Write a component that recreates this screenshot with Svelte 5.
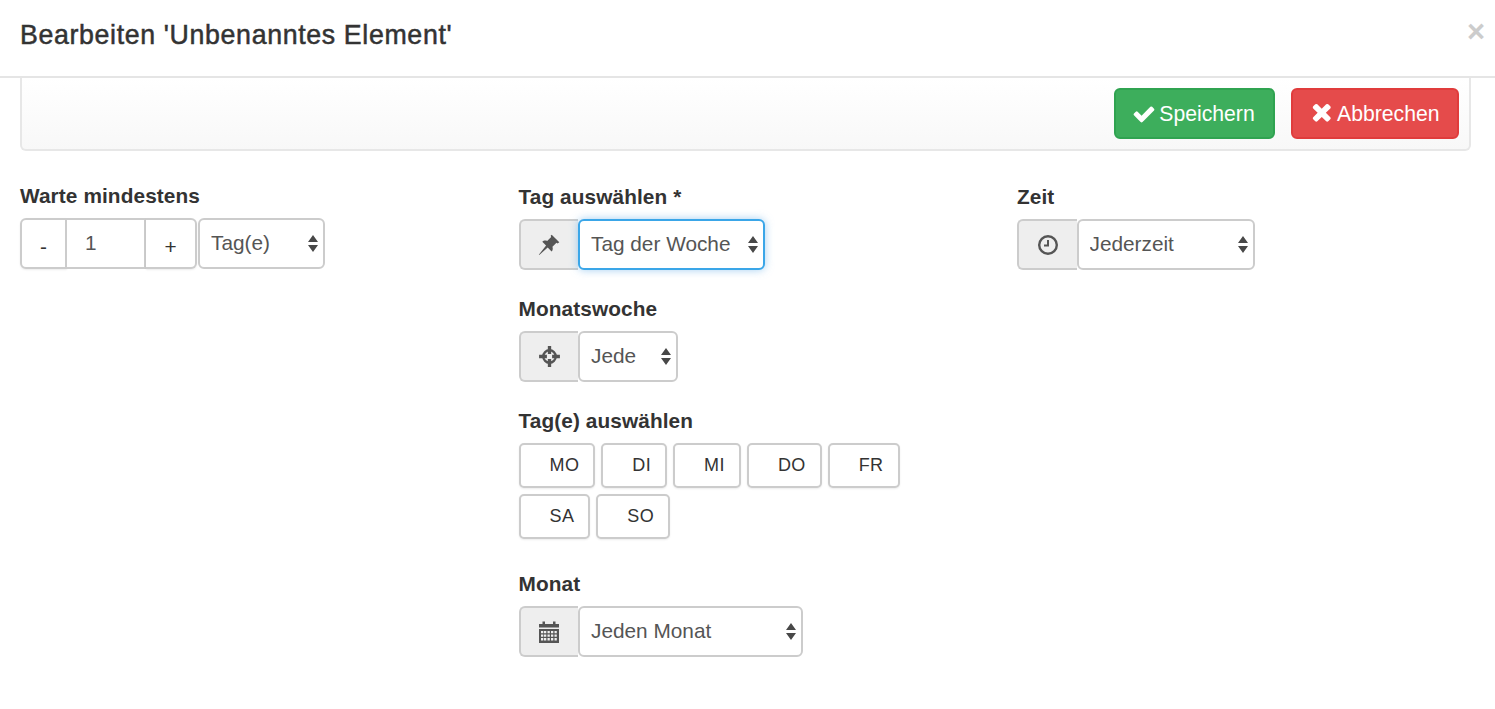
<script>
  const dayRows = ['MO', 'DI', 'MI', 'DO', 'FR', 'SA', 'SO'];
</script>

<div class="modal">
  <header class="modal-header">
    <h4>Bearbeiten 'Unbenanntes Element'</h4>
    <button class="close">×</button>
  </header>

  <div class="toolbar">
    <button class="btn save">
      <svg viewBox="0 0 1792 1792" width="24" height="24"><path d="M1671 566q0 40-28 68l-724 724-136 136q-28 28-68 28t-68-28l-136-136-362-362q-28-28-28-68t28-68l136-136q28-28 68-28t68 28l294 295 656-657q28-28 68-28t68 28l136 136q28 28 28 68z" /></svg>
      Speichern
    </button>
    <button class="btn cancel">
      <svg viewBox="0 0 1408 1792" width="21.500" height="27"><path d="M1298 1214q0 40-28 68l-136 136q-28 28-68 28t-68-28l-294-294-294 294q-28 28-68 28t-68-28l-136-136q-28-28-28-68t28-68l294-294-294-294q-28-28-28-68t28-68l136-136q28-28 68-28t68 28l294 294 294-294q28-28 68-28t68 28l136 136q28 28 28 68t-28 68l-294 294 294 294q28 28 28 68z" /></svg>
      Abbrechen
    </button>
  </div>

  <div class="form-row">
    <div class="col first">
      <label>Warte mindestens</label>
      <div class="stepper">
        <div class="group">
          <button class="step minus">-</button>
          <input class="count" value="1" />
          <button class="step plus">+</button>
        </div>
        <select class="unit"><option>Tag(e)</option></select>
      </div>
    </div>

    <div class="col">
      <label>Tag auswählen *</label>
      <div class="group field">
        <span class="addon">
          <svg viewBox="0 0 24 24" width="26" height="26"><path d="M14.500 2.500l7 7-1.600 1-1-.6-3.700 3.600c.6 2 .2 3.500-.8 4.500l-3.600-3.600L3 21.200l-.4-.3 6.700-8.400-3.500-3.500c1-1 2.600-1.400 4.500-.8l3.700-3.700-.5-1z" /></svg>
        </span>
        <select class="focused"><option>Tag der Woche</option></select>
      </div>

      <label>Monatswoche</label>
      <div class="group field">
        <span class="addon">
          <svg viewBox="0 0 24 24" width="25" height="25"><circle cx="12" cy="12" r="6" fill="none" stroke="#555" stroke-width="2.200" /><path d="M10.400 2h3.200v7.500h-3.200zM10.400 14.500h3.200V22h-3.200zM2 10.400h7.500v3.200H2zM14.500 10.400H22v3.200h-7.500z" /></svg>
        </span>
        <select class="w-jede"><option>Jede</option></select>
      </div>

      <label>Tag(e) auswählen</label>
      <div class="days">
        {#each dayRows as day}
          <button class="day">{day}</button>
        {/each}
      </div>

      <label>Monat</label>
      <div class="group field">
        <span class="addon">
          <svg viewBox="0 0 20 22" width="20" height="22"><path fill-rule="evenodd" d="M0 3h3.500V.5H6V3h8V.5h2.500V3H20v3.500H0zM0 8h20v14H0zM2 10v2.200h2.300V10zM5 10v2.200h2.300V10zM8.500 10v2.200h2.300V10zM12 10v2.200h2.300V10zM15.500 10v2.200h2.300V10zM2 13.500v2.200h2.300v-2.200zM5 13.500v2.200h2.300v-2.200zM8.500 13.500v2.200h2.300v-2.200zM12 13.500v2.200h2.300v-2.200zM15.500 13.500v2.200h2.300v-2.200zM2 17v2.500h2.300V17zM5 17v2.500h2.300V17zM8.500 17v2.500h2.300V17zM12 17v2.500h2.300V17zM15.500 17v2.500h2.300V17z" /></svg>
        </span>
        <select class="w-monat"><option>Jeden Monat</option></select>
      </div>
    </div>

    <div class="col">
      <label>Zeit</label>
      <div class="group field">
        <span class="addon">
          <svg viewBox="0 0 24 24" width="24" height="24"><circle cx="12" cy="12" r="8.800" fill="none" stroke="#555" stroke-width="2.400" /><path d="M11 7h2v6.500H8v-2h3z" /></svg>
        </span>
        <select class="w-zeit"><option>Jederzeit</option></select>
      </div>
    </div>
  </div>
</div>

<style>
  :global(body) {
    margin: 0;
    background: #fff;
    font-family: "Liberation Sans", Arial, sans-serif;
    color: #333;
  }

  .modal {
    height: 709px;
    overflow: hidden;
  }

  .modal-header {
    display: flex;
    justify-content: space-between;
    align-items: flex-start;
    height: 56px;
    padding: 20px 10px 0 20px;
    border-bottom: 2px solid #e5e5e5;
  }

  h4 {
    margin: 0;
    font-size: 26.750px;
    line-height: 30px;
    font-weight: 400;
    letter-spacing: 0.64px;
    -webkit-text-stroke: 0.5px #333;
  }

  .close {
    border: none;
    background: none;
    padding: 0;
    font: bold 31px/24px "Liberation Sans", sans-serif;
    color: #ccc;
  }

  .toolbar {
    display: flex;
    justify-content: flex-end;
    gap: 16px;
    margin: 0 24px 0 20px;
    padding: 10px 10px 10px 0;
    height: 51px;
    border: 2px solid #e7e7e7;
    border-top: none;
    border-radius: 0 0 6px 6px;
    background: linear-gradient(to bottom, #fff, #f8f8f8);
  }

  .btn {
    display: flex;
    align-items: center;
    justify-content: center;
    gap: 5px;
    height: 51px;
    padding: 0;
    border-radius: 6px;
    border: 2px solid;
    font: 21.200px "Liberation Sans", sans-serif;
    color: #fff;
  }

  .btn svg {
    fill: #fff;
  }

  .save {
    width: 161px;
    gap: 3px;
    padding-right: 2px;
    background: #3dae5c;
    border-color: #2fa350;
  }

  .cancel {
    width: 168px;
    background: #e54b4b;
    border-color: #e03c3c;
  }

  .form-row {
    display: grid;
    grid-template-columns: 498.500px 498.500px 1fr;
    margin-top: 33px;
  }

  .col {
    padding-left: 20px;
  }

  .col.first {
    margin-top: -1px;
  }

  label {
    display: block;
    height: 26px;
    margin-bottom: 9px;
    font-size: 20.800px;
    line-height: 26px;
    font-weight: bold;
    letter-spacing: 0.1px;
  }

  .group {
    display: flex;
    height: 51px;
  }

  .field {
    margin-bottom: 26px;
  }

  .addon {
    display: flex;
    align-items: center;
    justify-content: center;
    width: 59.500px;
    box-sizing: border-box;
    background: #eee;
    border: 2px solid #ccc;
    border-right: none;
    border-radius: 6px 0 0 6px;
  }

  .addon svg {
    fill: #555;
  }

  select {
    appearance: none;
    height: 51px;
    box-sizing: border-box;
    margin: 0;
    padding: 0 30px 3px 11px;
    border: 2px solid #ccc;
    border-radius: 6px;
    font: 20.800px "Liberation Sans", sans-serif;
    color: #555;
    background: #fff url("data:image/svg+xml,%3Csvg xmlns='http://www.w3.org/2000/svg' width='10' height='17'%3E%3Cpath fill='%23484848' d='M5 0l5 7H0zM0 10h10l-5 7z'/%3E%3C/svg%3E") no-repeat right 5px center;
  }

  select.focused {
    border-color: #3aa6e8;
    box-shadow: 0 0 8px rgba(102, 175, 233, 0.6);
    width: 187px;
  }

  .w-jede {
    width: 100px;
  }

  .w-monat {
    width: 225px;
  }

  .w-zeit {
    width: 178px;
  }

  .stepper {
    display: flex;
    gap: 1px;
  }

  .step {
    width: 47px;
    height: 51px;
    box-sizing: border-box;
    padding: 6px 0 0;
    background: #fff;
    border: 2px solid #ccc;
    font: 20.800px "Liberation Sans", sans-serif;
    color: #333;
    box-shadow: 0 1px 2px rgba(0, 0, 0, 0.08);
  }

  .minus {
    border-radius: 6px 0 0 6px;
  }

  .plus {
    width: 51px;
    border-left: none;
    border-radius: 0 6px 6px 0;
  }

  .count {
    width: 79px;
    height: 51px;
    box-sizing: border-box;
    padding: 0 0 2px 18px;
    border: 2px solid #ccc;
    border-left: none;
    font: 20.800px "Liberation Sans", sans-serif;
    color: #555;
  }

  .unit {
    width: 127px;
  }

  .days {
    display: flex;
    flex-wrap: wrap;
    gap: 6px;
    width: 385px;
    margin-bottom: 32px;
  }

  .day {
    height: 45px;
    box-sizing: border-box;
    padding: 0 14px 0 29px;
    background: #fff;
    border: 2px solid #ccc;
    border-radius: 5px;
    font: 18px "Liberation Sans", sans-serif;
    letter-spacing: 0.4px;
    color: #333;
    box-shadow: 0 1px 2px rgba(0, 0, 0, 0.08);
  }
</style>
